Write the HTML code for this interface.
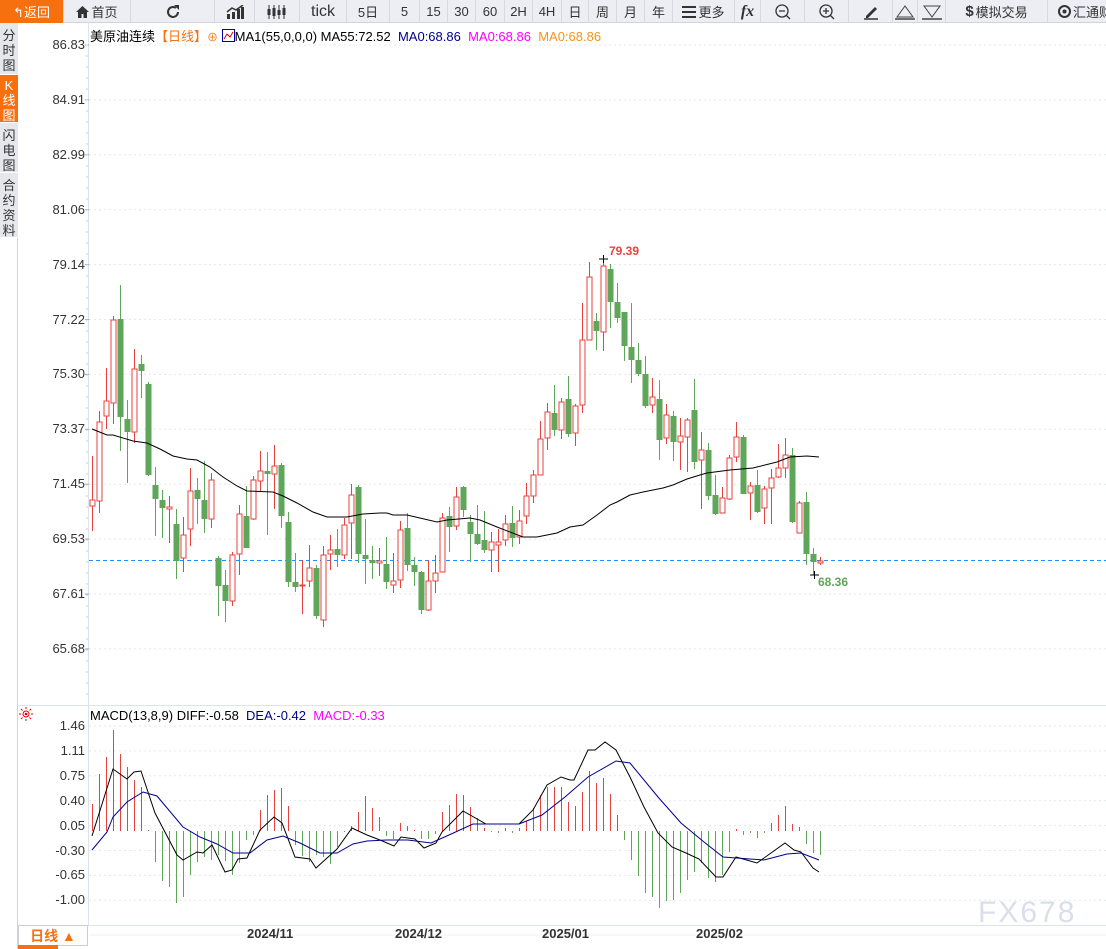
<!DOCTYPE html>
<html><head><meta charset="utf-8"><style>
*{margin:0;padding:0;box-sizing:border-box}
body{width:1106px;height:949px;overflow:hidden;background:#fff;font-family:"Liberation Sans","Noto Sans CJK SC",sans-serif;position:relative}
.tb{position:absolute;left:0;top:0;width:1106px;height:23px;background:#eceef3;border-bottom:1px solid #d0d4dc}
.b{position:absolute;top:0;height:23px;border-right:1px solid #d6d9e0;font-size:13px;color:#333;display:flex;align-items:center;justify-content:center;gap:2px;white-space:nowrap;overflow:hidden}
.side{position:absolute;left:0;width:18px;background:#e4e7ec;border-bottom:1px solid #fff;font-size:13px;line-height:15px;color:#333;text-align:center;padding-top:5px}
.lab{position:absolute;right:1021px;font-size:13px;color:#333;text-align:right}
</style></head><body>
<div class="tb">
<div class="b" style="left:0;width:64px;background:#f7700f;color:#fff">&#x21B0;返回</div>
<div class="b" style="left:64px;width:67px"><svg width="13" height="12" viewBox="0 0 13 12"><path d="M6.5 0L0 6h2v6h3.5V8h2v4H11V6h2z" fill="#333"/></svg>首页</div>
<div class="b" style="left:131px;width:84px"><svg width="18" height="18" viewBox="0 0 18 18"><path d="M14 9a5 5 0 1 1-2-4" fill="none" stroke="#333" stroke-width="2"/><path d="M10 2h5v5z" fill="#333"/></svg></div>
<div class="b" style="left:215px;width:40px"><svg width="18" height="14" viewBox="0 0 18 14"><path d="M1 14V9h3v5zM6 14V7h3v7zM11 14V4h3v10zM15 14V2h3v12z" fill="#333"/><path d="M1 7L6 3l4 2 7-5" fill="none" stroke="#333" stroke-width="1.5"/></svg></div>
<div class="b" style="left:255px;width:45px"><svg width="20" height="14" viewBox="0 0 20 14"><path d="M2 0v14M7 0v14M12 0v14M17 0v14" stroke="#333"/><rect x="0.5" y="4" width="3" height="6" fill="#333"/><rect x="5.5" y="3" width="3" height="8" fill="#333"/><rect x="10.5" y="5" width="3" height="5" fill="#333"/><rect x="15.5" y="3" width="3" height="7" fill="#333"/></svg></div>
<div class="b" style="left:300px;width:47px;font-size:16px">tick</div>
<div class="b" style="left:347px;width:43px">5日</div>
<div class="b" style="left:390px;width:30px">5</div>
<div class="b" style="left:420px;width:28px">15</div>
<div class="b" style="left:448px;width:28px">30</div>
<div class="b" style="left:476px;width:29px">60</div>
<div class="b" style="left:505px;width:28px">2H</div>
<div class="b" style="left:533px;width:29px">4H</div>
<div class="b" style="left:562px;width:27px">日</div>
<div class="b" style="left:589px;width:28px">周</div>
<div class="b" style="left:617px;width:28px">月</div>
<div class="b" style="left:645px;width:28px">年</div>
<div class="b" style="left:673px;width:62px"><svg width="14" height="12"><path d="M0 1h14M0 6h14M0 11h14" stroke="#333" stroke-width="2"/></svg>更多</div>
<div class="b" style="left:735px;width:26px;font-family:'Liberation Serif',serif;font-style:italic;font-weight:bold;font-size:16px">fx</div>
<div class="b" style="left:761px;width:44px"><svg width="16" height="16"><circle cx="7" cy="7" r="6" fill="none" stroke="#333" stroke-width="1.3"/><path d="M4 7h6M11 11l4 4" stroke="#333" stroke-width="1.3"/></svg></div>
<div class="b" style="left:805px;width:44px"><svg width="16" height="16"><circle cx="7" cy="7" r="6" fill="none" stroke="#333" stroke-width="1.3"/><path d="M4 7h6M7 4v6M11 11l4 4" stroke="#333" stroke-width="1.3"/></svg></div>
<div class="b" style="left:849px;width:44px"><svg width="16" height="16"><path d="M3 12L12 3l2 2-9 9H3z" fill="#333"/><path d="M1 15h14" stroke="#333" stroke-width="1.5"/></svg></div>
<div class="b" style="left:893px;width:25px"><svg width="20" height="17"><path d="M2 14L10 3l8 11z" fill="none" stroke="#444"/><path d="M0 16h20" stroke="#444" stroke-width="1.5"/></svg></div>
<div class="b" style="left:918px;width:28px"><svg width="20" height="17"><path d="M2 3l8 11 8-11z" fill="none" stroke="#444"/><path d="M0 16h20" stroke="#444" stroke-width="1.5"/></svg></div>
<div class="b" style="left:946px;width:102px"><b style="font-size:15px">$</b>模拟交易</div>
<div class="b" style="left:1048px;width:58px;justify-content:flex-start;padding-left:10px;border-right:none"><svg width="13" height="13" style="flex:none"><circle cx="6.5" cy="6.5" r="5.5" fill="none" stroke="#333" stroke-width="2"/><circle cx="6.5" cy="6.5" r="2" fill="#333"/></svg>汇通财经</div>
</div>
<div class="side" style="top:23px;height:52px">分<br>时<br>图</div>
<div class="side" style="top:75px;height:48px;background:#f7700f;color:#fff;padding-top:3px">K<br>线<br>图</div>
<div class="side" style="top:123px;height:50px">闪<br>电<br>图</div>
<div class="side" style="top:173px;height:65px">合<br>约<br>资<br>料</div>
<div style="position:absolute;left:0;top:238px;width:18px;height:711px;border-right:1px solid #d0d4dc"></div>

<div style="position:absolute;left:90px;top:26px;font-size:13px;white-space:nowrap;color:#000">美原油连续<span style="color:#f7700f">【日线】</span><span style="color:#f7700f;font-size:11px">⊕</span> <svg width="13" height="13" style="vertical-align:-1px"><rect x="0.5" y="0.5" width="12" height="12" fill="#fff" stroke="#00a"/><path d="M2 10l3-5 3 3 3-5" stroke="#d00" fill="none"/></svg>MA1(55,0,0,0) MA55:72.52 &nbsp;<span style="color:#00008b">MA0:68.86</span> &nbsp;<span style="color:#f0f">MA0:68.86</span> &nbsp;<span style="color:#f7931e">MA0:68.86</span></div>
<div style="position:absolute;left:90px;top:708px;font-size:13px;white-space:nowrap;color:#000">MACD(13,8,9) DIFF:-0.58 &nbsp;<span style="color:#00008b">DEA:-0.42</span> &nbsp;<span style="color:#f0f">MACD:-0.33</span></div>
<svg style="position:absolute;left:19px;top:707px" width="14" height="14"><circle cx="7" cy="7" r="3" fill="none" stroke="#e00"/><circle cx="7" cy="7" r="1.3" fill="#e00"/><path d="M7 0v2M7 12v2M0 7h2M12 7h2M2 2l1.5 1.5M10.5 10.5L12 12M2 12l1.5-1.5M10.5 3.5L12 2" stroke="#e00"/></svg>

<svg id="ch" style="position:absolute;left:0;top:0" width="1106" height="949"></svg>
<div id="labs"></div>

<div style="position:absolute;left:18px;top:925px;width:70px;height:21px;border:1px solid #ccd;color:#f7700f;font-size:14px;font-weight:bold;text-align:center;line-height:20px">日线 ▲</div>
<div style="position:absolute;left:18px;top:945px;width:40px;height:4px;background:#f7700f"></div>
<div style="position:absolute;left:247px;top:926px;font-size:13px;font-weight:bold;color:#333">2024/11</div>
<div style="position:absolute;left:395px;top:926px;font-size:13px;font-weight:bold;color:#333">2024/12</div>
<div style="position:absolute;left:542px;top:926px;font-size:13px;font-weight:bold;color:#333">2025/01</div>
<div style="position:absolute;left:696px;top:926px;font-size:13px;font-weight:bold;color:#333">2025/02</div>
<div style="position:absolute;left:609px;top:244px;font-size:12px;font-weight:bold;color:#e8423f">79.39</div>
<div style="position:absolute;left:818px;top:575px;font-size:12px;font-weight:bold;color:#5fa55a">68.36</div>
<div style="position:absolute;left:978px;top:896px;font-size:30px;color:#d9dfea;letter-spacing:2px">FX678</div>

<script>
var C=[[500,506,456,531,1],[422,501,411,513,1],[401,416,368,429,1],[320,403,316,424,1],[319,417,285,451,0],[419,432,400,483,0],[369,432,349,443,1],[364,371,355,398,0],[384,475,382,476,0],[485,499,467,536,0],[500,508,490,538,0],[507,509,496,543,1],[524,561,509,579,0],[535,558,517,572,1],[491,529,468,546,1],[490,499,478,524,0],[500,519,461,533,0],[480,519,473,528,1],[558,586,556,616,0],[585,601,570,622,0],[555,601,552,606,1],[514,554,505,575,1],[516,548,486,548,0],[480,519,476,520,1],[471,481,451,491,1],[471,474,452,535,0],[466,474,445,509,1],[465,516,463,528,0],[522,582,512,587,0],[582,587,553,592,0],[585,586,560,614,1],[568,581,545,587,1],[568,616,565,619,0],[555,620,546,627,1],[550,554,535,570,1],[549,555,529,567,0],[525,555,518,559,1],[495,523,484,559,1],[487,554,485,563,0],[555,559,519,584,0],[560,563,546,579,0],[561,563,548,576,1],[564,582,537,589,0],[581,585,553,593,1],[530,580,521,588,1],[528,565,513,571,0],[565,572,557,586,0],[572,610,571,614,0],[581,610,560,611,1],[573,581,555,593,1],[518,572,513,572,1],[516,527,507,552,0],[497,526,487,530,1],[487,510,486,517,0],[522,534,515,562,0],[534,544,505,545,0],[540,550,511,553,0],[542,550,532,572,1],[542,545,529,572,1],[524,540,515,546,1],[523,538,506,547,0],[521,537,510,544,1],[496,516,483,524,1],[475,496,470,503,1],[439,475,421,475,1],[412,438,403,450,1],[413,430,385,436,0],[402,430,398,439,1],[399,434,376,437,0],[406,433,404,446,1],[340,405,303,413,1],[277,340,262,340,1],[321,331,313,350,0],[266,332,259,351,1],[269,302,264,328,0],[302,318,283,323,0],[312,346,312,361,0],[347,360,303,383,0],[360,374,343,376,0],[374,406,356,408,0],[397,405,378,413,1],[399,440,380,460,0],[415,438,404,444,1],[416,442,411,461,0],[436,442,418,470,1],[420,437,418,472,1],[410,462,379,469,0],[450,460,432,509,1],[450,496,443,500,0],[495,514,475,515,0],[498,513,487,513,1],[458,499,455,500,1],[437,457,422,462,1],[437,494,435,494,0],[486,493,482,520,1],[485,512,470,513,0],[489,508,486,524,1],[478,488,469,524,1],[468,477,444,478,1],[455,468,438,478,1],[455,522,448,523,0],[503,533,501,533,1],[502,554,492,565,0],[554,562,548,575,0],[561,563,557,565,1]];
var H=[804,774,757,730,754,767,780,787,830,862,881,887,903,897,875,862,857,860,855,861,875,863,840,835,810,795,790,788,806,845,856,862,855,857,864,847,832,826,812,796,808,817,836,839,823,826,830,839,839,834,812,805,794,795,807,818,828,832,833,828,833,828,821,808,795,787,787,787,802,806,792,771,783,778,794,815,840,860,876,893,897,908,901,900,893,880,872,863,878,882,875,852,829,835,833,838,833,823,815,806,824,827,844,853,855];
var MA="92,429 107,435 113,435 133,441 147,443 160,449 173,456 187,459 197,460 210,467 223,477 237,486 247,491 273,492 283,496 297,503 313,512 327,517 347,517 363,514 380,513 387,513 393,515 407,515 437,522 447,520 470,518 480,520 497,527 523,537 537,537 557,533 570,527 583,525 597,515 610,505 617,502 630,495 643,492 663,488 673,485 687,479 700,475 707,473 730,470 753,468 777,462 790,457 807,456 819,457";
var DIF="92,836 113,769 127,779 134,772 141,771 155,813 177,855 183,860 197,852 203,853 212,845 225,872 232,870 238,859 247,858 260,830 274,817 282,823 295,857 310,859 316,868 337,849 352,828 367,835 380,840 394,846 401,837 415,839 424,848 436,843 442,832 463,811 486,824 519,824 533,810 547,785 561,777 570,780 574,780 588,750 595,750 605,742 616,750 630,777 644,807 658,833 672,847 686,853 699,859 716,877 723,877 736,857 757,863 785,843 794,850 801,852 813,868 819,872";
var DEA="92,850 107,832 113,817 127,802 143,792 157,796 183,827 200,837 217,844 233,853 250,853 267,840 283,836 300,843 320,853 337,853 353,844 367,841 387,840 408,840 431,843 449,835 473,824 519,824 542,815 565,797 588,777 616,761 630,763 658,797 681,823 704,842 723,857 750,859 764,860 787,854 801,853 819,860";
var s='';
s+='<line x1="88.5" y1="23" x2="88.5" y2="925" stroke="#dde3ea"/>';
s+='<line x1="18" y1="705.5" x2="1106" y2="705.5" stroke="#dde3ea"/>';
s+='<line x1="18" y1="925.5" x2="1106" y2="925.5" stroke="#dde3ea"/>';
var pl=['86.83','84.91','82.99','81.06','79.14','77.22','75.30','73.37','71.45','69.53','67.61','65.68'];
var L='';
for(var i=0;i<12;i++){var y=45+i*54.9;s+='<line x1="89" y1="'+y+'" x2="1106" y2="'+y+'" stroke="#e4e7ec" stroke-dasharray="2,3"/><line x1="85" y1="'+y+'" x2="89" y2="'+y+'" stroke="#9ab"/>';
L+='<div class="lab" style="top:'+(y-8)+'px">'+pl[i]+'</div>';}
for(var y=45;y<700;y+=11)s+='<line x1="86" y1="'+y+'" x2="88" y2="'+y+'" stroke="#ccd"/>';
var ml=['1.46','1.11','0.75','0.40','0.05','-0.30','-0.65','-1.00'];
for(var i=0;i<8;i++){var y=726+i*24.9;s+='<line x1="89" y1="'+y+'" x2="1106" y2="'+y+'" stroke="#e4e7ec" stroke-dasharray="2,3"/>';L+='<div class="lab" style="top:'+(y-8)+'px">'+ml[i]+'</div>';}
document.getElementById('labs').innerHTML=L;
s+='<line x1="89" y1="560.5" x2="1106" y2="560.5" stroke="#1e8fff" stroke-dasharray="4,3"/>';
for(var i=0;i<C.length;i++){var x=Math.round(92+7*i)+0.5,c=C[i],col=c[4]?'#e8423f':'#5fa55a';
s+='<line x1="'+x+'" y1="'+c[2]+'" x2="'+x+'" y2="'+c[3]+'" stroke="'+col+'"/>';
var h=Math.max(1,c[1]-c[0]);
if(c[4])s+='<rect x="'+(x-2.5)+'" y="'+c[0]+'" width="5" height="'+h+'" fill="#fff" stroke="'+col+'"/>';
else s+='<rect x="'+(x-3)+'" y="'+c[0]+'" width="6" height="'+h+'" fill="'+col+'"/>';}
s+='<polyline points="'+MA+'" fill="none" stroke="#000"/>';
for(var i=0;i<H.length;i++){var x=Math.round(92+7*i)+0.5,v=H[i];s+='<line x1="'+x+'" y1="831" x2="'+x+'" y2="'+v+'" stroke="'+(v<831?'#e8423f':'#5fa55a')+'"/>';}
s+='<polyline points="'+DIF+'" fill="none" stroke="#000"/><polyline points="'+DEA+'" fill="none" stroke="#00008b"/>';
s+='<path d="M599 259h9M603.5 255v8M810 575h9M814.5 571v8" stroke="#000"/>';
s+='<line x1="89" y1="935" x2="1106" y2="935" stroke="#eef0f4"/>';
document.getElementById('ch').innerHTML=s;
</script>
</body></html>
